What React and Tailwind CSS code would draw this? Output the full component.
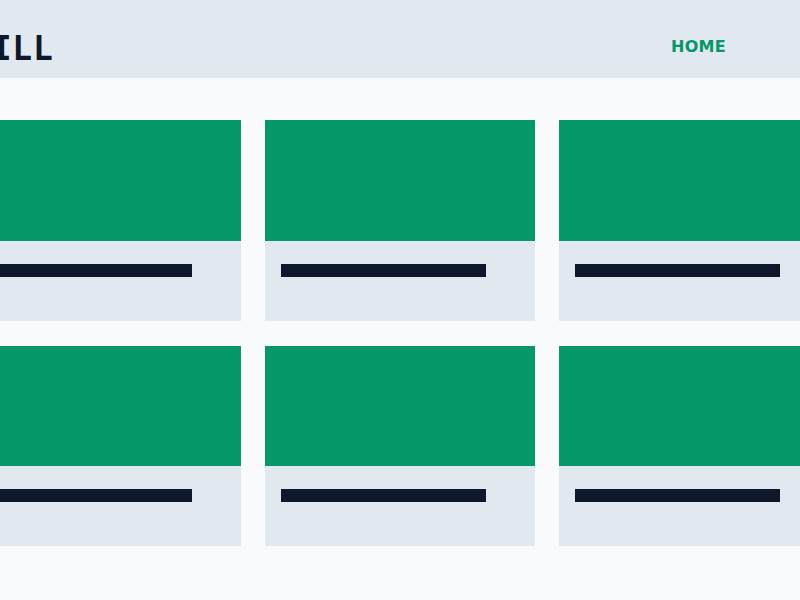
import React from "react";

const cards = [1, 2, 3, 4, 5, 6];

function Card() {
  return (
    <div className="bg-[#e2e8f0]">
      <div className="h-[120.5px] bg-[#059669]" />
      <div className="h-20 px-4 pt-[23px]">
        <div className="h-[13px] w-[205px] bg-[#0f172a]" />
      </div>
    </div>
  );
}

export default function App() {
  return (
    <div className="min-h-screen overflow-hidden bg-[#f8fafc]">
      {/* header */}
      <header className="flex h-[77.5px] justify-center bg-[#e2e8f0]">
        <div className="flex w-[858px] shrink-0 items-center justify-between pr-[103px] pt-[20px]">
          <h1 className="font-['DejaVu_Sans_Mono',monospace] text-[33px] font-bold leading-none tracking-[0.8px] text-[#0f172a]">
            MILL
          </h1>
          <nav className="mb-[5px]">
            <a href="#" className="font-['DejaVu_Sans',sans-serif] text-base font-bold tracking-[0.3px] text-[#059669]">
              HOME
            </a>
          </nav>
        </div>
      </header>

      {/* grid */}
      <main className="flex justify-center pt-[42.5px] pb-12">
        <div className="grid w-[858px] shrink-0 grid-cols-3 gap-x-6 gap-y-[25px]">
          {cards.map((c) => (
            <Card key={c} />
          ))}
        </div>
      </main>
    </div>
  );
}
